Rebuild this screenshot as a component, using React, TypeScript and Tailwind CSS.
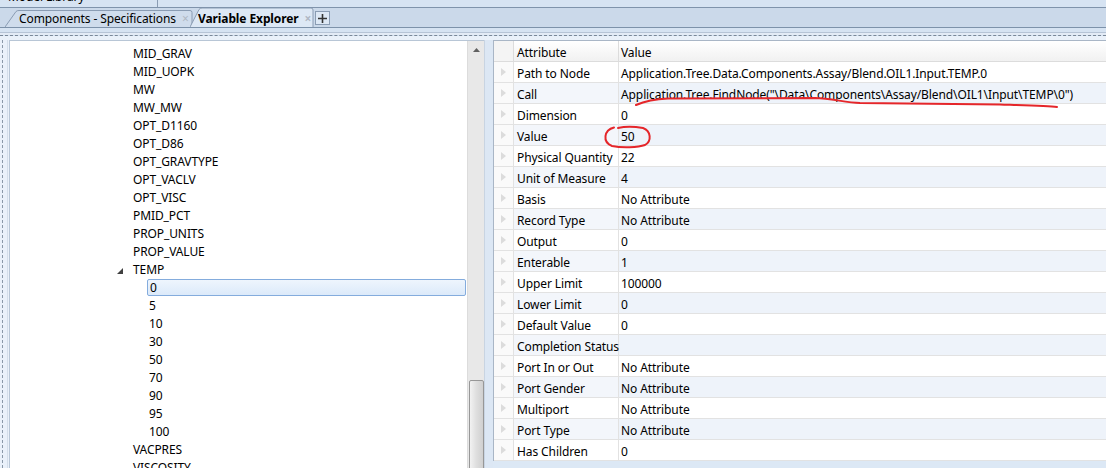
import React from "react";

const FONT = { fontFamily: '"Noto Sans", "Open Sans", sans-serif' };

const tree: { t: string; l: number; open?: boolean; sel?: boolean }[] = [
  { t: "MID_GRAV", l: 1 },
  { t: "MID_UOPK", l: 1 },
  { t: "MW", l: 1 },
  { t: "MW_MW", l: 1 },
  { t: "OPT_D1160", l: 1 },
  { t: "OPT_D86", l: 1 },
  { t: "OPT_GRAVTYPE", l: 1 },
  { t: "OPT_VACLV", l: 1 },
  { t: "OPT_VISC", l: 1 },
  { t: "PMID_PCT", l: 1 },
  { t: "PROP_UNITS", l: 1 },
  { t: "PROP_VALUE", l: 1 },
  { t: "TEMP", l: 1, open: true },
  { t: "0", l: 2, sel: true },
  { t: "5", l: 2 },
  { t: "10", l: 2 },
  { t: "30", l: 2 },
  { t: "50", l: 2 },
  { t: "70", l: 2 },
  { t: "90", l: 2 },
  { t: "95", l: 2 },
  { t: "100", l: 2 },
  { t: "VACPRES", l: 1 },
  { t: "VISCOSITY", l: 1 },
];

const rows: [string, string][] = [
  ["Path to Node", "Application.Tree.Data.Components.Assay/Blend.OIL1.Input.TEMP.0"],
  ["Call", 'Application.Tree.FindNode("\\Data\\Components\\Assay/Blend\\OIL1\\Input\\TEMP\\0")'],
  ["Dimension", "0"],
  ["Value", "50"],
  ["Physical Quantity", "22"],
  ["Unit of Measure", "4"],
  ["Basis", "No Attribute"],
  ["Record Type", "No Attribute"],
  ["Output", "0"],
  ["Enterable", "1"],
  ["Upper Limit", "100000"],
  ["Lower Limit", "0"],
  ["Default Value", "0"],
  ["Completion Status", ""],
  ["Port In or Out", "No Attribute"],
  ["Port Gender", "No Attribute"],
  ["Multiport", "No Attribute"],
  ["Port Type", "No Attribute"],
  ["Has Children", "0"],
];

function Tab({ label, active, w }: { label: string; active?: boolean; w: number }) {
  return (
    <div className="relative h-[19px] flex items-end" style={{ width: w }}>
      <svg className="absolute inset-0" width={w} height={19}>
        <path
          d={
            active
              ? `M0 19 L9 1.5 Q10 0 12 0 L${w - 3} 0 Q${w - 1} 0 ${w - 1} 2 L${w - 1} 19`
              : `M0 19 L11 3.5 Q12 2.5 14 2.5 L${w - 3} 2.5 Q${w - 1} 2.5 ${w - 1} 4.5 L${w - 1} 19`
          }
          fill={active ? "#dde8f5" : "#cfdcec"}
          stroke="#8a9cb3"
          strokeWidth="1"
        />
      </svg>
      <div
        className={`relative flex items-center h-[18px] pt-[2px] text-[12px] text-black ${active ? "font-bold pl-[8px]" : "pl-[14px]"}`}
      >
        <span>{label}</span>
        <span className="ml-[6px] text-[#b0b8c4] text-[12px] leading-none">×</span>
      </div>
    </div>
  );
}

export default function App() {
  return (
    <div
      className="relative w-[1106px] h-[468px] overflow-hidden bg-[#d6e3f2] flex flex-col text-black tracking-[-0.1px]"
      style={FONT}
    >
      {/* top strip */}
      <div className="h-[8px] flex border-b border-[#7f93ab] bg-[#d6e3f2] overflow-hidden">
        <div className="w-[158px] border-r border-[#8a9cb3] pl-[8px] overflow-hidden">
          <div className="text-[12px] leading-[14px] mt-[-10px]">Model Library</div>
        </div>
      </div>

      {/* tabs row */}
      <div className="h-[20px] flex items-end bg-[#cbd9ea] border-b border-[#7d92aa] pl-[5px]">
        <Tab label="Components - Specifications" w={188} />
        <div className="ml-[-3px]">
          <Tab label="Variable Explorer" active w={124} />
        </div>
        <div className="ml-[1px] mb-[2px] w-[15px] h-[14px] border border-[#8a9cb3] bg-[#dde8f5] flex items-center justify-center">
          <svg width="9" height="9" viewBox="0 0 9 9">
            <path d="M4.5 0 V9 M0 4.5 H9" stroke="#333" strokeWidth="1.6" />
          </svg>
        </div>
      </div>

      {/* separator band */}
      <div className="h-[12px] flex flex-col">
        <div className="h-[4px] bg-[#d6e3f2]" />
        <div className="h-[1px] bg-[#b6c4d6]" />
        <div className="h-[2px] bg-[#e3ebf6]" />
        <div className="h-[1px] border-t border-dashed border-[#7a8898]" />
        <div className="h-[4px] bg-[#eaf1fa]" />
      </div>

      {/* main */}
      <div className="flex-1 flex min-h-0">
        {/* left dotted strip */}
        <div className="w-[9px] bg-[#eaf1fa] flex">
          <div className="ml-[2px] w-[2px] border-l border-dashed border-[#8a98a8]" />
          <div className="ml-[3px] w-[1px] bg-[#d4deea]" />
        </div>

        {/* tree panel */}
        <div className="w-[475px] flex border-l border-t border-[#b8c6d6] bg-white min-h-0">
          <div className="flex-1 pt-[4px] overflow-hidden">
            {tree.map((n, i) => (
              <div key={i} className="h-[18px] relative flex items-center">
                {n.open && (
                  <svg className="absolute left-[107px] top-[7px]" width="6" height="6">
                    <polygon points="6,0 6,6 0,6" fill="#404040" />
                  </svg>
                )}
                {n.sel ? (
                  <div className="ml-[137px] mt-[-2px] w-[319px] h-[17px] rounded-[2px] border border-[#84acdd] bg-gradient-to-b from-[#eef5fd] to-[#dceafa] flex items-center pl-[2px] pt-[2px] text-[12px]">
                    {n.t}
                  </div>
                ) : (
                  <div
                    className={`text-[12px] leading-[18px] ${n.l === 1 ? "ml-[123px]" : "ml-[139px]"}`}
                  >
                    {n.t}
                  </div>
                )}
              </div>
            ))}
          </div>
          {/* scrollbar */}
          <div className="w-[17px] bg-[#e8e8e8] border-l border-[#dcdcdc] flex flex-col items-center">
            <svg className="mt-[7px]" width="7" height="4">
              <polygon points="3.5,0 7,4 0,4" fill="#606060" />
            </svg>
            <div className="flex-1" />
            <div className="w-[15px] h-[92px] mb-[-4px] rounded-[2px] border border-[#979797] bg-gradient-to-r from-[#f2f2f2] via-[#dedede] to-[#d0d0d0]" />
          </div>
        </div>

        {/* splitter */}
        <div className="w-[9px] bg-[#dce7f4] border-l border-[#c8d4e2]" />

        {/* property grid */}
        <div className="flex-1 flex flex-col bg-[#dce8f5] min-w-0">
          <div className="border-l border-t border-[#a9b6c6] bg-white">
            {/* header */}
            <div className="h-[21px] flex text-[12px] bg-gradient-to-b from-[#ffffff] to-[#f1f1f1] border-b border-[#dcdcdc]">
              <div className="w-[20px] border-r border-[#dcdcdc] bg-[#f4f4f4]" />
              <div className="w-[105px] border-r border-[#dcdcdc] pl-[3px] pt-[3px] flex items-center">Attribute</div>
              <div className="flex-1 pl-[2px] pt-[3px] flex items-center">Value</div>
            </div>
            {rows.map(([a, v], i) => (
              <div key={i} className="h-[21px] flex text-[12px] border-b border-[#e2e2e2]">
                <div className="w-[20px] border-r border-[#e2e2e2] bg-[#fafafa] flex items-center justify-center">
                  <svg width="5" height="8">
                    <polygon points="0,0 5,4 0,8" fill="#dcdcdc" />
                  </svg>
                </div>
                <div
                  className={`w-[105px] border-r border-[#e2e2e2] pl-[3px] pt-[3px] flex items-center whitespace-nowrap ${i % 2 === 1 ? "bg-[#f3f6fb]" : "bg-white"}`}
                >
                  {a}
                </div>
                <div
                  className={`flex-1 pl-[2px] pt-[3px] flex items-center whitespace-nowrap overflow-hidden ${i % 2 === 1 ? "bg-[#eef3fa]" : "bg-white"}`}
                >
                  {v}
                </div>
              </div>
            ))}
          </div>
        </div>
      </div>

      {/* red annotations */}
      <svg className="absolute inset-0 pointer-events-none" width="1106" height="468">
        <path
          d="M636 105 C 645 101, 655 99, 668 98.5 L 815 98 C 832 98.5, 845 102.5, 860 103 L 1000 104.5 C 1030 105.5, 1048 106, 1057 107"
          fill="none"
          stroke="#e5262a"
          strokeWidth="2"
          strokeLinecap="round"
        />
        <path
          d="M614 127.5 C 604 130, 602 142, 612 146 C 622 148, 638 147.5, 645 145 C 652 141, 651 131, 643 128 C 635 126.5, 624 126.5, 618 128"
          fill="none"
          stroke="#e5262a"
          strokeWidth="2"
          strokeLinecap="round"
        />
      </svg>
    </div>
  );
}
